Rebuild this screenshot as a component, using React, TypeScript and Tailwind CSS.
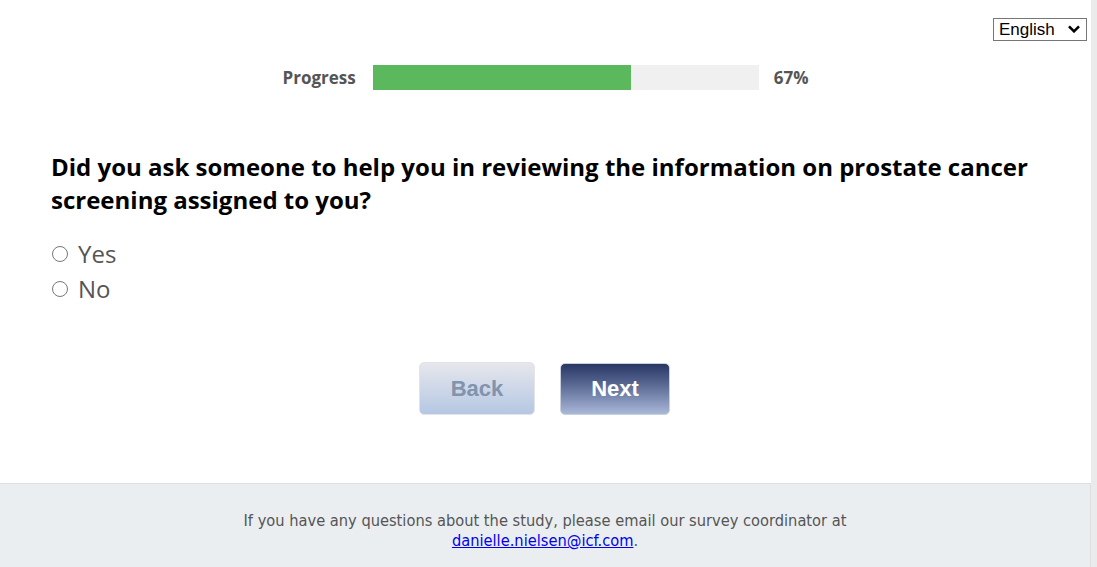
import React from 'react';

export default function App() {
  const progress = 67;

  return (
    <div className="flex h-[567px] w-full overflow-hidden bg-white">
      <div className="flex flex-1 flex-col">
        {/* Language picker */}
        <div className="flex justify-end pr-[4px] pt-[17px]">
          <div className="relative h-[23px] w-[94px]">
            <select
              defaultValue="en"
              className="h-full w-full appearance-none border border-[#767676] bg-white pl-[5px] text-[17px] leading-[21px] text-black [font-family:'Liberation_Sans',Arial,sans-serif]"
            >
              <option value="en">English</option>
              <option value="es">Español</option>
            </select>
            <svg
              viewBox="0 0 12 8"
              className="pointer-events-none absolute right-[7px] top-[8px] h-[8px] w-[12px]"
              fill="none"
              stroke="black"
              strokeWidth="2.6"
            >
              <path d="M1 1.3 6 6.3 11 1.3" />
            </svg>
          </div>
        </div>

        {/* Progress */}
        <div className="mt-[25px] flex items-center justify-center [font-family:'Open_Sans',sans-serif]">
          <span className="mr-[17px] text-[17px] font-bold text-[#555]">Progress</span>
          <div className="h-[25px] w-[386px] bg-[#f0f0f0]">
            <div className="h-full bg-[#5cb85c]" style={{ width: `${progress}%` }} />
          </div>
          <span className="ml-[15px] text-[17px] font-bold text-[#555]">{progress}%</span>
        </div>

        {/* Question */}
        <div className="mt-[59px] pl-[51px] pr-[40px] [font-family:'Open_Sans',sans-serif]">
          <h1 className="text-[24px] font-bold leading-[33px] text-black">
            Did you ask someone to help you in reviewing the information on prostate cancer screening assigned to you?
          </h1>
          <div className="mt-[22px] flex flex-col gap-[3px]">
            {['Yes', 'No'].map(label => (
              <label key={label} className="flex h-[32px] items-center text-[24px] text-[#555]">
                <span className="ml-[1px] mr-[10px] h-[16px] w-[16px] rounded-full border border-[#777]" />
                {label}
              </label>
            ))}
          </div>
        </div>

        {/* Navigation */}
        <div className="mt-[57px] flex justify-center gap-[25px] pr-[2px] [font-family:'Liberation_Sans',Arial,sans-serif]">
          <button className="h-[53px] w-[116px] rounded-[5px] border border-[#e2e4ea] bg-gradient-to-b from-[#e6e7ec] to-[#b5c7e3] text-[22px] font-bold text-[#8293ad]">
            Back
          </button>
          <button className="mt-[1px] h-[52px] w-[110px] rounded-[5px] border border-[#c9cfdc] bg-gradient-to-b from-[#283664] to-[#aab8d8] text-[22px] font-bold text-white">
            Next
          </button>
        </div>

        {/* Footer */}
        <footer className="mt-auto h-[84px] border-t border-r border-[#dcdfe3] bg-[#ebeef1] pt-[27px] text-center text-[16.3px] leading-[20px] text-[#555] [font-family:'DejaVu_Sans_Condensed','DejaVu_Sans',sans-serif]">
          <p>If you have any questions about the study, please email our survey coordinator at</p>
          <p>
            <a href="#" className="text-[#0000ee] underline">danielle.nielsen@icf.com</a>.
          </p>
        </footer>
      </div>
      <div className="w-[6px] bg-[#ebebeb]" />
    </div>
  );
}
